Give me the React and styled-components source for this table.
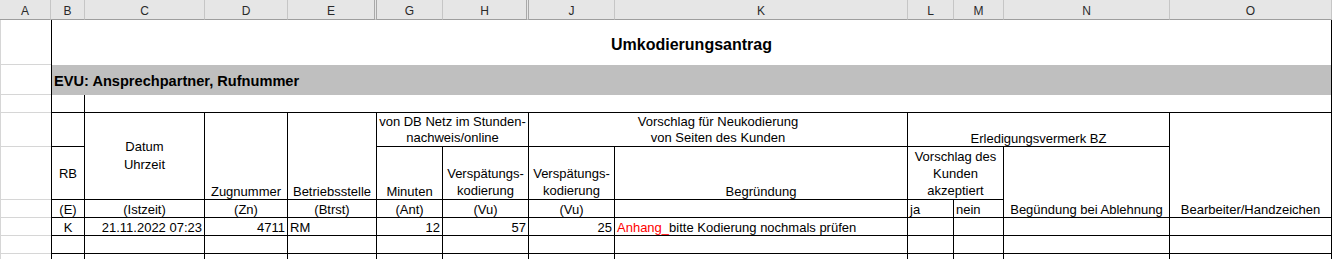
import styled, { createGlobalStyle } from "styled-components";

const GlobalStyle = createGlobalStyle`
  *, *::before, *::after { box-sizing: border-box; }
  html, body {
    margin: 0;
    padding: 0;
    background: #fff;
    overflow: hidden;
  }
  body {
    font-family: "Liberation Sans", Arial, sans-serif;
    color: #000;
  }
`;

const COLUMNS = ["A", "B", "C", "D", "E", "G", "H", "J", "K", "L", "M", "N", "O"];
// hidden columns F and I sit right of E and H
const HIDDEN_AFTER = ["E", "H"];

const Viewport = styled.div`
  height: 100vh;
  overflow: hidden;
`;

const Sheet = styled.div`
  display: grid;
  grid-template-columns: 51px 34px 120px 83px 89px 66px 86px 86px 293px 46px 50px 166px 162px;
  grid-template-rows: 20px 45px 30px 18px 34px 53px 18px 18px 18px 18px;
  width: 1332px;
  font-size: 13px;
`;

const ColHead = styled.div`
  grid-row: 1;
  display: flex;
  align-items: center;
  justify-content: center;
  padding-top: 2px;
  background: #e6e6e6;
  border-bottom: 1px solid #9e9e9e;
  border-right: ${(p) => (p.$hidden ? "3px double #a9a9a9" : "1px solid #c6c6c6")};
  font-size: 12px;
  color: #2a2a2a;
`;

const Gutter = styled.div`
  grid-column: 1;
  grid-row: ${(p) => p.$row};
  border-left: 1px solid #d6d6d6;
  border-bottom: 1px solid #d6d6d6;
`;

const Title = styled.div`
  grid-column: 2 / span 12;
  grid-row: 2;
  display: flex;
  align-items: center;
  justify-content: center;
  padding-top: 4px;
  border-left: 1px solid #000;
  border-right: 1px solid #000;
  font-size: 16px;
  font-weight: bold;
`;

const Band = styled.div`
  grid-column: 2 / span 12;
  grid-row: 3;
  display: flex;
  align-items: center;
  padding: 2px 0 0 2px;
  background: #bfbfbf;
  border-left: 1px solid #000;
  border-right: 1px solid #000;
  font-size: 14.6px;
  font-weight: bold;
`;

const V = { top: "flex-start", middle: "center", bottom: "flex-end" };
const H = { left: "flex-start", center: "center", right: "flex-end" };

const Cell = styled.div`
  grid-column: ${(p) => p.$col} / span ${(p) => p.$cs || 1};
  grid-row: ${(p) => p.$row} / span ${(p) => p.$rs || 1};
  display: flex;
  flex-direction: column;
  justify-content: ${(p) => V[p.$v || "bottom"]};
  align-items: ${(p) => H[p.$h || "center"]};
  text-align: ${(p) => p.$h || "center"};
  padding: 0 ${(p) => (p.$h === "center" || !p.$h ? 1 : 2)}px;
  line-height: ${(p) => p.$lh || 15}px;
  white-space: pre;
  overflow: hidden;
  border-left: ${(p) => (p.$col === 2 ? "1px solid #000" : "none")};
  border-right: 1px solid #000;
  border-bottom: 1px solid #000;
`;

const Red = styled.span`
  color: #ff0000;
`;

// grid columns: A=1 B=2 C=3 D=4 E=5 G=6 H=7 J=8 K=9 L=10 M=11 N=12 O=13
const headerCells = [
  { col: 2, row: 5 },
  { col: 2, row: 6, v: "middle", text: "RB" },
  { col: 3, row: 5, rs: 2, v: "middle", lh: 18, text: "Datum\nUhrzeit" },
  { col: 4, row: 5, rs: 2, text: "Zugnummer" },
  { col: 5, row: 5, rs: 2, text: "Betriebsstelle" },
  { col: 6, row: 5, cs: 2, v: "middle", lh: 16, text: "von DB Netz im Stunden-\nnachweis/online" },
  { col: 8, row: 5, cs: 2, v: "middle", lh: 16, text: "Vorschlag für Neukodierung\nvon Seiten des Kunden" },
  { col: 10, row: 5, cs: 3, text: "Erledigungsvermerk BZ" },
  { col: 13, row: 5, rs: 3, text: "Bearbeiter/Handzeichen" },
  { col: 6, row: 6, text: "Minuten" },
  { col: 7, row: 6, lh: 17, text: "Verspätungs-\nkodierung" },
  { col: 8, row: 6, lh: 17, text: "Verspätungs-\nkodierung" },
  { col: 9, row: 6, text: "Begründung" },
  { col: 10, row: 6, cs: 2, v: "middle", lh: 17, text: "Vorschlag des\nKunden\nakzeptiert" },
  { col: 12, row: 6, rs: 2, text: "Begündung bei Ablehnung" },
  { col: 2, row: 7, text: "(E)" },
  { col: 3, row: 7, text: "(Istzeit)" },
  { col: 4, row: 7, text: "(Zn)" },
  { col: 5, row: 7, text: "(Btrst)" },
  { col: 6, row: 7, text: "(Ant)" },
  { col: 7, row: 7, text: "(Vu)" },
  { col: 8, row: 7, text: "(Vu)" },
  { col: 9, row: 7 },
  { col: 10, row: 7, h: "left", text: "ja" },
  { col: 11, row: 7, h: "left", text: "nein" },
];

const entry = [
  { h: "center", text: "K" },
  { h: "right", text: "21.11.2022 07:23" },
  { h: "right", text: "4711" },
  { h: "left", text: "RM" },
  { h: "right", text: "12" },
  { h: "right", text: "57" },
  { h: "right", text: "25" },
  {
    h: "left",
    text: (
      <span>
        <Red>Anhang_</Red>bitte Kodierung nochmals prüfen
      </span>
    ),
  },
  {},
  {},
  {},
  {},
];

const emptyRow = Array.from({ length: 12 }, () => ({}));

const App = () => {
  const bodyRows = [entry, emptyRow, emptyRow];

  return (
    <>
      <GlobalStyle />
      <Viewport>
        <Sheet>
          {COLUMNS.map((c) => (
            <ColHead key={c} $hidden={HIDDEN_AFTER.includes(c)}>
              {c}
            </ColHead>
          ))}

          {[2, 3, 4, 5, 6, 7, 8, 9, 10].map((r) => (
            <Gutter key={r} $row={r} />
          ))}

          <Title>Umkodierungsantrag</Title>
          <Band>EVU: Ansprechpartner, Rufnummer</Band>

          <Cell $col={2} $row={4} />
          <Cell $col={3} $cs={11} $row={4} />

          {headerCells.map((c, i) => (
            <Cell
              key={i}
              $col={c.col}
              $row={c.row}
              $cs={c.cs}
              $rs={c.rs}
              $v={c.v}
              $h={c.h}
              $lh={c.lh}
            >
              {c.text}
            </Cell>
          ))}

          {bodyRows.map((cells, r) =>
            cells.map((c, i) => (
              <Cell key={`${r}-${i}`} $col={i + 2} $row={r + 8} $h={c.h}>
                {c.text}
              </Cell>
            ))
          )}
        </Sheet>
      </Viewport>
    </>
  );
};

export default App;
